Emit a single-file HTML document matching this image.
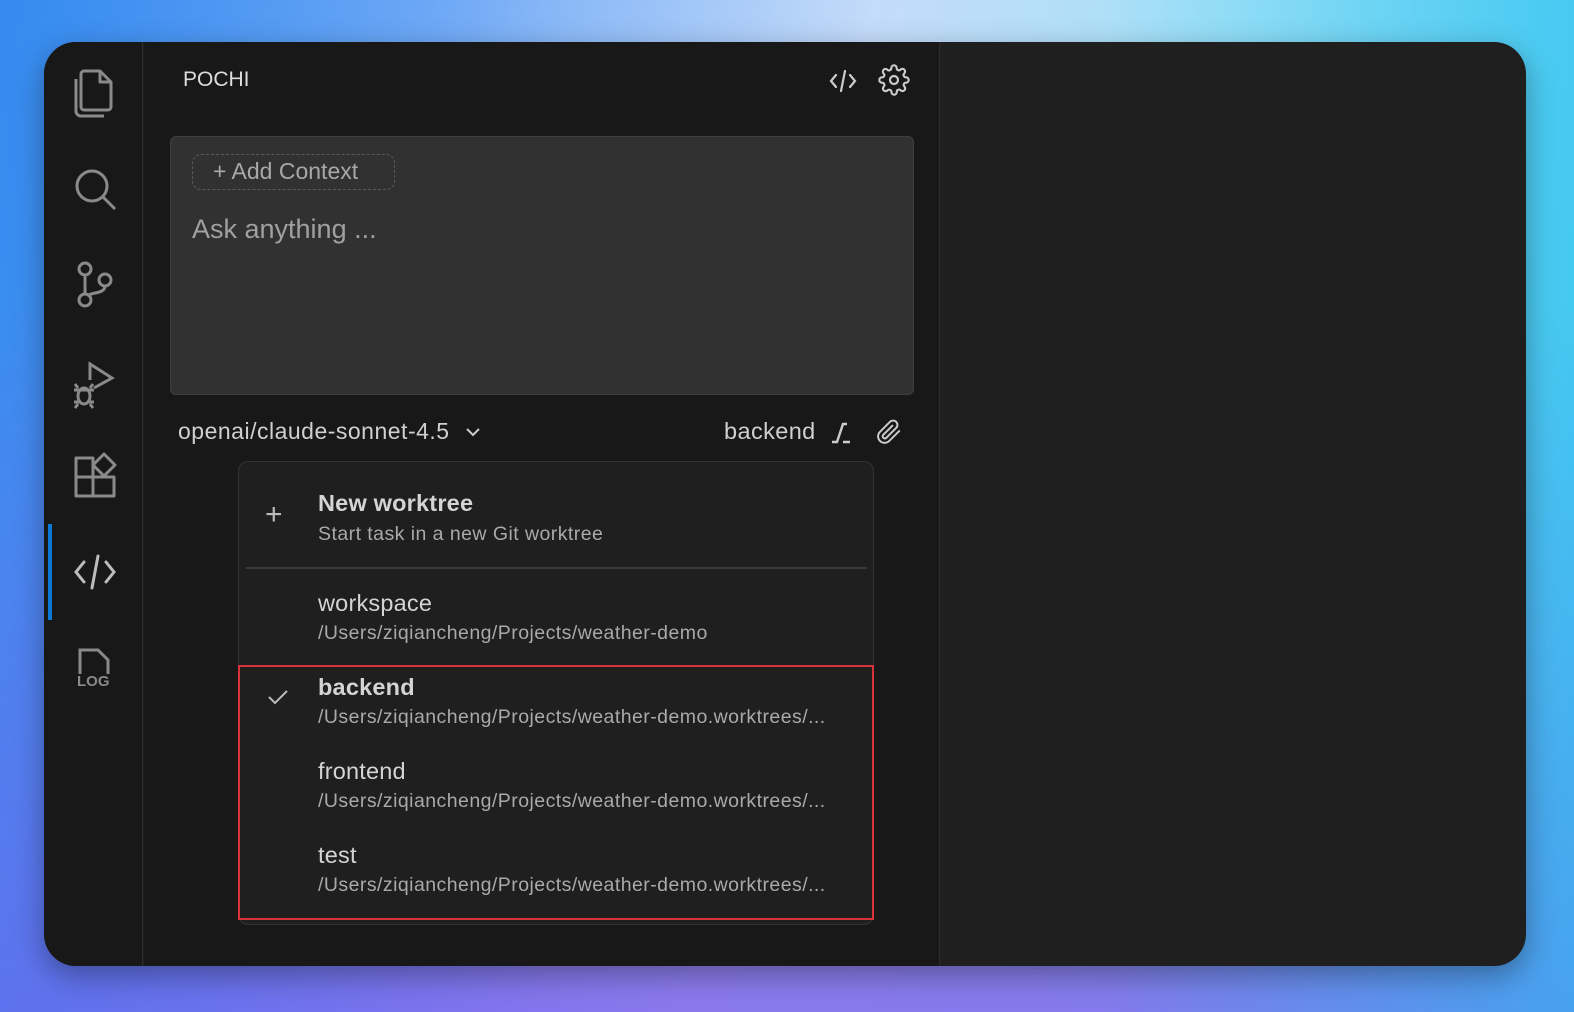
<!DOCTYPE html>
<html><head><style>
*{margin:0;padding:0;box-sizing:border-box}
body{width:1574px;height:1012px;overflow:hidden;font-family:"Liberation Sans",sans-serif;
background:linear-gradient(100deg,#3a8ef0 0%,#72aaf6 25%,#c4dbf9 50%,#a2e2f7 72%,#5cd6f2 100%);position:relative}
.bg2{position:absolute;inset:0;background:linear-gradient(180deg,rgba(0,0,0,0) 30%,rgba(125,95,235,0.8) 100%);}
.bg3{position:absolute;inset:0;background:linear-gradient(90deg,rgba(40,130,240,.3) 0%,rgba(0,0,0,0) 35%,rgba(0,0,0,0) 70%,rgba(40,190,240,.6) 100%)}
.win{position:absolute;left:44px;top:42px;width:1482px;height:924px;border-radius:32px;overflow:hidden;background:#1f1f1f;box-shadow:0 10px 30px rgba(0,0,0,.35)}
.side{position:absolute;left:0;top:0;width:99px;height:100%;background:#181818;border-right:1px solid #2b2b2b}
.panel{position:absolute;left:100px;top:0;width:796px;height:100%;background:#181818;border-right:1px solid #2b2b2b}
.ic{position:absolute;left:28px}
.act{position:absolute;left:4px;top:482px;width:4px;height:96px;background:#0a78d4}
.t{position:absolute;color:#ccc;white-space:nowrap}
.box{position:absolute;left:26px;top:94px;width:744px;height:259px;background:#313131;border:1px solid #3e3e3e;border-radius:6px}
.addc{position:absolute;left:21px;top:17px;width:203px;height:36px;border:1.5px dashed #5a5a5a;border-radius:9px;color:#a8a8a8;font-size:23px;line-height:33px;padding-left:20px}
.dd{position:absolute;left:194px;top:419px;width:636px;height:464px;background:#1f1f1f;border:1px solid #333;border-radius:10px}
.it{position:absolute;left:79px}
.ti{font-size:23.5px;color:#d4d4d4;letter-spacing:.2px}
.pa{font-size:19.5px;color:#a9a9a9;margin-top:5px;white-space:nowrap;letter-spacing:.45px}
</style></head><body>
<div class="bg2"></div><div class="bg3"></div>
<div class="win">
<div class="side">
<div class="act"></div>
<svg class="ic" style="top:26px" width="46" height="52" viewBox="0 0 46 52" fill="none" stroke="#8a8a8a" stroke-width="3" stroke-linejoin="round"><path d="M12 3h16l11 11v25a3 3 0 0 1-3 3H12a3 3 0 0 1-3-3V6a3 3 0 0 1 3-3z"/><path d="M28 3v11h11"/><path d="M4 11v32a5 5 0 0 0 5 5h23"/></svg>
<svg class="ic" style="top:124px" width="46" height="46" viewBox="0 0 46 46" fill="none" stroke="#8a8a8a" stroke-width="3"><circle cx="20" cy="20" r="15"/><path d="M31 31l12 12"/></svg>
<svg class="ic" style="top:218px" width="46" height="50" viewBox="0 0 46 50" fill="none" stroke="#8a8a8a" stroke-width="3"><circle cx="13" cy="9" r="6"/><circle cx="13" cy="40" r="6"/><circle cx="33" cy="20" r="6"/><path d="M13 15v19M33 26c0 8-14 6-18 10"/></svg>
<svg class="ic" style="top:318px" width="46" height="50" viewBox="0 0 46 50" fill="none" stroke="#8a8a8a" stroke-width="3"><path d="M18 20V4l22 14-18 10"/><ellipse cx="12" cy="36" rx="6" ry="8"/><path d="M2 30h20M2 42h5M17 42h5M6 28l-3-4M18 28l3-4M6 44l-3 4M18 44l3 4"/></svg>
<svg class="ic" style="top:410px" width="46" height="48" viewBox="0 0 46 48" fill="none" stroke="#8a8a8a" stroke-width="3" stroke-linejoin="round"><path d="M4 6h17v38H4zM4 25h38v19H21"/><path d="M32 2l11 11-11 11-11-11z"/></svg>
<svg class="ic" style="top:510px" width="46" height="40" viewBox="0 0 46 40" fill="none" stroke="#bdbdbd" stroke-width="3" stroke-linecap="round"><path d="M12 10L4 20l8 10M34 10l8 10-8 10M26 4L20 36"/></svg>
<svg class="ic" style="top:604px" width="46" height="50" viewBox="0 0 46 50" fill="none" stroke="#8a8a8a" stroke-width="3"><path d="M8 28V4h18l10 10v14"/><text x="5" y="40" fill="#8a8a8a" stroke="none" font-family="Liberation Sans" font-weight="bold" font-size="15">LOG</text></svg>
</div>
<div class="panel">
<div class="t" style="left:39px;top:26px;font-size:21px;color:#ddd">POCHI</div>
<svg style="position:absolute;left:684px;top:26px" width="30" height="26" viewBox="0 0 30 26" fill="none" stroke="#ccc" stroke-width="2.2" stroke-linecap="round"><path d="M8 7l-5 6 5 6M22 7l5 6-5 6M17 3l-4 20"/></svg>
<svg style="position:absolute;left:734px;top:22px" width="32" height="32" viewBox="0 0 24 24" fill="none" stroke="#ccc" stroke-width="1.6"><circle cx="12" cy="12" r="3"/><path d="M19.4 15a1.65 1.65 0 0 0 .33 1.82l.06.06a2 2 0 1 1-2.83 2.83l-.06-.06a1.65 1.65 0 0 0-1.820-.33 1.65 1.65 0 0 0-1 1.51V21a2 2 0 1 1-4 0v-.09A1.65 1.65 0 0 0 9 19.4a1.65 1.65 0 0 0-1.82.33l-.06.06a2 2 0 1 1-2.83-2.83l.06-.06A1.65 1.65 0 0 0 4.6 15a1.65 1.65 0 0 0-1.51-1H3a2 2 0 1 1 0-4h.09A1.65 1.65 0 0 0 4.6 9a1.65 1.65 0 0 0-.33-1.82l-.06-.06a2 2 0 1 1 2.83-2.830l.06.06A1.65 1.65 0 0 0 9 4.6a1.65 1.65 0 0 0 1-1.51V3a2 2 0 1 1 4 0v.09a1.65 1.65 0 0 0 1 1.51 1.65 1.65 0 0 0 1.82-.33l.06-.06a2 2 0 1 1 2.83 2.83l-.06.06A1.65 1.65 0 0 0 19.4 9a1.65 1.65 0 0 0 1.51 1H21a2 2 0 1 1 0 4h-.09a1.65 1.65 0 0 0-1.51 1z"/></svg>
<div class="box">
<div class="addc">+ Add Context</div>
<div class="t" style="left:21px;top:77px;font-size:27px;color:#a0a0a0">Ask anything ...</div>
</div>
<div class="t" style="left:34px;top:376px;font-size:23px;letter-spacing:.5px;color:#d0d0d0">openai/claude-sonnet-4.5</div>
<svg style="position:absolute;left:321px;top:383px" width="16" height="14" viewBox="0 0 16 14" fill="none" stroke="#ccc" stroke-width="2"><path d="M2 4l6 6 6-6"/></svg>
<div class="t" style="left:580px;top:376px;font-size:23.5px;letter-spacing:.4px;color:#d0d0d0">backend</div>
<svg style="position:absolute;left:686px;top:378px" width="24" height="26" viewBox="0 0 24 26" fill="none" stroke="#ccc" stroke-width="2.4"><path d="M2 22h5l6-18h4M13 22h7"/></svg>
<svg style="position:absolute;left:732px;top:376px" width="26" height="28" viewBox="0 0 24 24" fill="none" stroke="#ccc" stroke-width="1.8" stroke-linecap="round"><path d="M21.4 11.1l-9.2 9.2a6 6 0 0 1-8.5-8.5l9.2-9.2a4 4 0 0 1 5.7 5.7l-9.2 9.2a2 2 0 0 1-2.8-2.8l8.5-8.5"/></svg>
</div>
<div class="dd">
<div class="t" style="left:26px;top:36px;font-size:30px;color:#bbb;font-weight:300">+</div>
<div class="it" style="top:28px"><div class="ti" style="font-weight:bold">New worktree</div><div class="pa" style="margin-top:6px">Start task in a new Git worktree</div></div>
<div style="position:absolute;left:7px;top:105px;width:621px;height:1.5px;background:#3a3a3a"></div>
<div class="it" style="top:128px"><div class="ti">workspace</div><div class="pa">/Users/ziqiancheng/Projects/weather-demo</div></div>
<div style="position:absolute;left:-1px;top:203px;width:636px;height:255px;border:2px solid #d8323c"></div>
<svg style="position:absolute;left:28px;top:226px" width="22" height="18" viewBox="0 0 22 18" fill="none" stroke="#bbb" stroke-width="2"><path d="M2 9l6 6L20 3"/></svg>
<div class="it" style="top:212px"><div class="ti" style="font-weight:bold">backend</div><div class="pa">/Users/ziqiancheng/Projects/weather-demo.worktrees/...</div></div>
<div class="it" style="top:296px"><div class="ti">frontend</div><div class="pa">/Users/ziqiancheng/Projects/weather-demo.worktrees/...</div></div>
<div class="it" style="top:380px"><div class="ti">test</div><div class="pa">/Users/ziqiancheng/Projects/weather-demo.worktrees/...</div></div>
</div>
</div>
</body></html>
